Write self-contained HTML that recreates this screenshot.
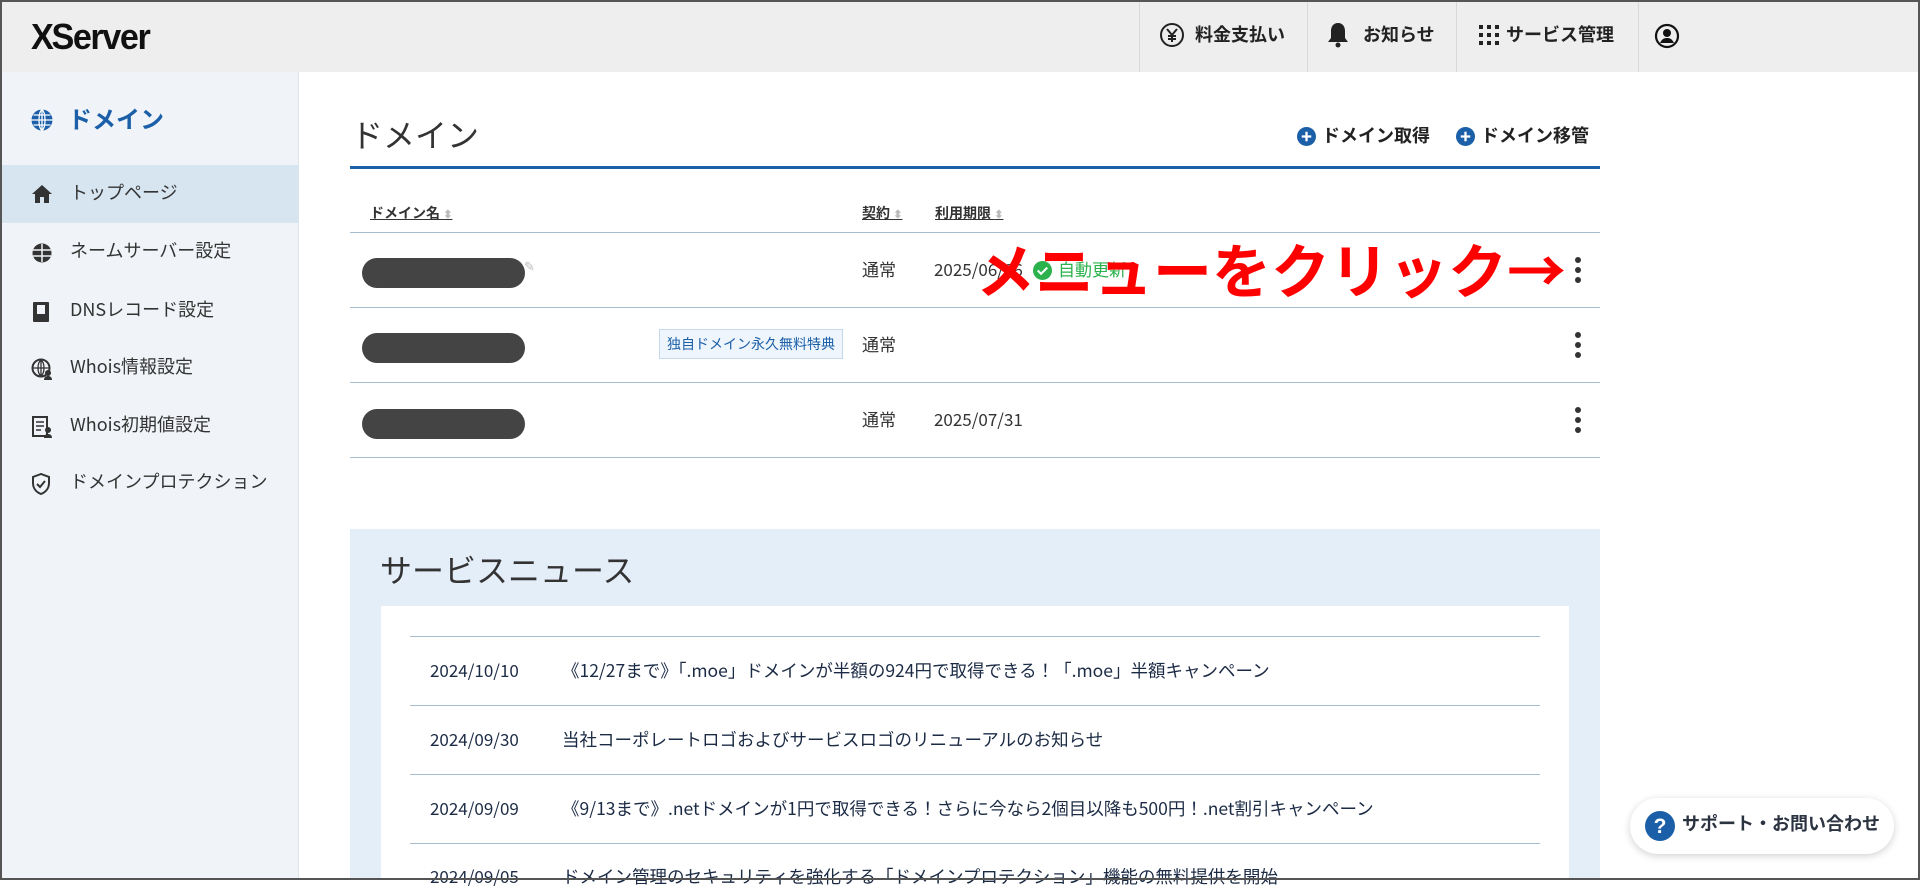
<!DOCTYPE html>
<html><head><meta charset="utf-8"><style>
*{margin:0;padding:0;box-sizing:border-box}
body{width:1920px;height:880px;overflow:hidden;position:relative;background:#fff;font-family:"Noto Sans CJK JP","Liberation Sans",sans-serif;color:#333;line-height:1.2}
.a{position:absolute;white-space:nowrap}
#frame{position:absolute;left:0;top:0;width:1920px;height:880px;border:2px solid #555;pointer-events:none;z-index:10}
#hdr{position:absolute;left:0;top:0;width:1920px;height:72px;background:#eeeeee}
.sep{position:absolute;top:0;width:1px;height:72px;background:#d8d8d8}
.hi{position:absolute;top:24px;font-size:18px;font-weight:bold;color:#222}
#side{position:absolute;left:0;top:72px;width:299px;height:808px;background:#f0f4f8;border-right:1px solid #dde3ea}
.nav{position:absolute;left:0;width:299px;height:58px;font-size:18px;color:#333}
.nav span{position:absolute;left:70px;top:17px}
.nav svg{position:absolute;left:31px;top:19px}
.line{position:absolute;height:1px;background:#a6bccf}
.pill{position:absolute;left:362px;width:163px;height:30px;border-radius:15px;background:#444}
.dots{position:absolute;left:1574px;width:8px}
.dots i{display:block;width:6px;height:6px;border-radius:3px;background:#333;margin:0 0 4px 1px}
.cell{position:absolute;font-size:17px;color:#333}
.nd{position:absolute;left:430px;font-size:17px;color:#1c2b45}
.nt{position:absolute;left:562px;font-size:17.5px;color:#1c2b45}
</style></head><body>
<div id="hdr">
 <div class="a" style="left:31px;top:15px;font-size:36px;font-weight:bold;color:#111;letter-spacing:-1.5px;font-family:'Liberation Sans',sans-serif;transform:scaleX(.95);transform-origin:left">X<span style="margin-left:-1px">Server</span></div>
 <div class="sep" style="left:1139px"></div><div class="sep" style="left:1307px"></div><div class="sep" style="left:1456px"></div><div class="sep" style="left:1638px"></div>
 <svg class="a" style="left:1159px;top:22px" width="26" height="26" viewBox="0 0 26 26"><circle cx="13" cy="13" r="11" fill="none" stroke="#222" stroke-width="2"/><path d="M8 7l5 6 5-6M13 13v7M9 14h8M9 17h8" stroke="#222" stroke-width="2" fill="none"/></svg>
 <div class="hi" style="left:1195px">料金支払い</div>
 <svg class="a" style="left:1327px;top:21px" width="22" height="28" viewBox="0 0 22 28"><path d="M11 2c-5 0-7 4-7 8v7l-3 4h20l-3-4v-7c0-4-2-8-7-8z" fill="#222"/><circle cx="11" cy="24" r="2.5" fill="#222"/></svg>
 <div class="hi" style="left:1363px">お知らせ</div>
 <svg class="a" style="left:1479px;top:25px" width="20" height="20" viewBox="0 0 20 20" fill="#222"><rect x="0" y="0" width="4" height="4"/><rect x="8" y="0" width="4" height="4"/><rect x="16" y="0" width="4" height="4"/><rect x="0" y="8" width="4" height="4"/><rect x="8" y="8" width="4" height="4"/><rect x="16" y="8" width="4" height="4"/><rect x="0" y="16" width="4" height="4"/><rect x="8" y="16" width="4" height="4"/><rect x="16" y="16" width="4" height="4"/></svg>
 <div class="hi" style="left:1506px">サービス管理</div>
 <svg class="a" style="left:1654px;top:23px" width="26" height="26" viewBox="0 0 26 26"><circle cx="13" cy="13" r="11" fill="none" stroke="#111" stroke-width="2.2"/><circle cx="13" cy="10" r="4" fill="#111"/><path d="M6 20c2-4 4-5 7-5s5 1 7 5" fill="#111"/></svg>
</div>
<div id="side">
 <svg class="a" style="left:30px;top:36px" width="24" height="24" viewBox="0 0 24 24"><circle cx="12" cy="12" r="10.5" fill="#1b5fa8"/><path d="M12 1.5v21M1.5 12h21M3.5 7h17M3.5 17h17M12 1.5c-4 3-4 18 0 21M12 1.5c4 3 4 18 0 21" stroke="#fff" stroke-width="1.3" fill="none"/></svg>
 <div class="a" style="left:68px;top:32px;font-size:24px;font-weight:bold;color:#1b5fa8">ドメイン</div>
 <div class="nav" style="top:93px;background:#d7e5f1"><svg width="22" height="20" viewBox="0 0 22 20"><path d="M11 1L1 10h3v9h5v-6h4v6h5v-9h3z" fill="#333"/></svg><span>トップページ</span></div>
 <div class="nav" style="top:151px"><svg width="22" height="22" viewBox="0 0 22 22"><circle cx="11" cy="11" r="9.5" fill="#333"/><path d="M2 8h18M2 14h18M11 2v18" stroke="#f0f4f8" stroke-width="1.5"/></svg><span>ネームサーバー設定</span></div>
 <div class="nav" style="top:210px"><svg width="20" height="22" viewBox="0 0 20 22"><rect x="2" y="1" width="16" height="20" rx="1" fill="#333"/><rect x="6" y="4" width="8" height="9" fill="#f0f4f8"/></svg><span>DNSレコード設定</span></div>
 <div class="nav" style="top:267px"><svg width="22" height="22" viewBox="0 0 22 22"><circle cx="10" cy="10" r="8.5" fill="none" stroke="#333" stroke-width="2"/><path d="M2 10h16M10 2v16M10 2c-4 3-4 13 0 16M10 2c4 3 4 13 0 16" stroke="#333" stroke-width="1.3" fill="none"/><circle cx="17" cy="15" r="3" fill="#333"/><path d="M13 22c0-3 2-4 4-4s4 1 4 4z" fill="#333"/></svg><span>Whois情報設定</span></div>
 <div class="nav" style="top:325px"><svg width="22" height="22" viewBox="0 0 22 22"><rect x="2" y="1" width="14" height="19" fill="none" stroke="#333" stroke-width="2"/><path d="M5 6h8M5 10h8M5 14h5" stroke="#333" stroke-width="1.6"/><circle cx="17" cy="14" r="3" fill="#333"/><path d="M13 22c0-3 2-4 4-4s4 1 4 4z" fill="#333"/></svg><span>Whois初期値設定</span></div>
 <div class="nav" style="top:382px"><svg width="20" height="22" viewBox="0 0 20 22"><path d="M10 1L2 4v6c0 5 3 9 8 11 5-2 8-6 8-11V4z" fill="none" stroke="#333" stroke-width="2"/><path d="M6 11l3 3 5-6" stroke="#333" stroke-width="2" fill="none"/></svg><span>ドメインプロテクション</span></div>
</div>

<div class="a" style="left:351px;top:115px;font-size:32px;color:#333">ドメイン</div>
<svg class="a" style="left:1297px;top:127px" width="19" height="19" viewBox="0 0 20 20"><circle cx="10" cy="10" r="10" fill="#1b5fa8"/><path d="M10 5v10M5 10h10" stroke="#fff" stroke-width="2.4"/></svg>
<div class="a" style="left:1322px;top:125px;font-size:18px;font-weight:bold;color:#222">ドメイン取得</div>
<svg class="a" style="left:1456px;top:127px" width="19" height="19" viewBox="0 0 20 20"><circle cx="10" cy="10" r="10" fill="#1b5fa8"/><path d="M10 5v10M5 10h10" stroke="#fff" stroke-width="2.4"/></svg>
<div class="a" style="left:1481px;top:125px;font-size:18px;font-weight:bold;color:#222">ドメイン移管</div>
<div class="a" style="left:350px;top:166px;width:1250px;height:3px;background:#1b5fa8"></div>

<div class="a" style="left:370px;top:205px;font-size:14px;font-weight:bold;color:#333;text-decoration:underline">ドメイン名 <span style="color:#bbb;font-size:11px">⬍</span></div>
<div class="a" style="left:862px;top:205px;font-size:14px;font-weight:bold;color:#333;text-decoration:underline">契約 <span style="color:#bbb;font-size:11px">⬍</span></div>
<div class="a" style="left:935px;top:205px;font-size:14px;font-weight:bold;color:#333;text-decoration:underline">利用期限 <span style="color:#bbb;font-size:11px">⬍</span></div>
<div class="line" style="left:350px;top:232px;width:1250px"></div>
<div class="line" style="left:350px;top:307px;width:1250px"></div>
<div class="line" style="left:350px;top:382px;width:1250px"></div>
<div class="line" style="left:350px;top:457px;width:1250px"></div>

<div class="pill" style="top:258px"></div><div class="a" style="left:524px;top:258px;color:#bbb;font-size:13px">✎</div>
<div class="pill" style="top:333px"></div>
<div class="pill" style="top:409px"></div>
<div class="a" style="left:659px;top:329px;width:184px;height:30px;background:#eef5fc;border:1px solid #c5d9ec;color:#1b5fa8;font-size:14px;line-height:28px;text-align:center">独自ドメイン永久無料特典</div>
<div class="cell" style="left:862px;top:259px">通常</div>
<div class="cell" style="left:862px;top:334px">通常</div>
<div class="cell" style="left:862px;top:409px">通常</div>
<div class="cell" style="left:934px;top:259px">2025/06/06</div>
<svg class="a" style="left:1033px;top:261px" width="19" height="19" viewBox="0 0 20 20"><circle cx="10" cy="10" r="10" fill="#2bb24c"/><path d="M5 10l3.5 3.5L15 7" stroke="#fff" stroke-width="2.2" fill="none"/></svg>
<div class="cell" style="left:1058px;top:259px;color:#2bb24c">自動更新</div>
<div class="cell" style="left:934px;top:409px">2025/07/31</div>
<div class="a" style="left:976px;top:228px;font-size:59px;font-weight:bold;color:#f00;line-height:80px">メニューをクリック→</div>
<div class="dots" style="top:257px"><i></i><i></i><i></i></div>
<div class="dots" style="top:332px"><i></i><i></i><i></i></div>
<div class="dots" style="top:407px"><i></i><i></i><i></i></div>

<div class="a" style="left:350px;top:529px;width:1250px;height:351px;background:#e4eef8"></div>
<div class="a" style="left:380px;top:550px;font-size:32px;color:#333">サービスニュース</div>
<div class="a" style="left:381px;top:606px;width:1188px;height:274px;background:#fff"></div>
<div class="line" style="left:410px;top:636px;width:1130px"></div>
<div class="line" style="left:410px;top:705px;width:1130px"></div>
<div class="line" style="left:410px;top:774px;width:1130px"></div>
<div class="line" style="left:410px;top:843px;width:1130px"></div>
<div class="nd" style="top:660px">2024/10/10</div><div class="nt" style="top:660px">《12/27まで》「.moe」ドメインが半額の924円で取得できる！「.moe」半額キャンペーン</div>
<div class="nd" style="top:729px">2024/09/30</div><div class="nt" style="top:729px">当社コーポレートロゴおよびサービスロゴのリニューアルのお知らせ</div>
<div class="nd" style="top:798px">2024/09/09</div><div class="nt" style="top:798px">《9/13まで》.netドメインが1円で取得できる！さらに今なら2個目以降も500円！.net割引キャンペーン</div>
<div class="nd" style="top:866px">2024/09/05</div><div class="nt" style="top:866px">ドメイン管理のセキュリティを強化する「ドメインプロテクション」機能の無料提供を開始</div>

<div class="a" style="left:1630px;top:798px;width:264px;height:56px;border-radius:28px;background:#fff;box-shadow:0 2px 8px rgba(0,0,0,.18)"></div>
<svg class="a" style="left:1645px;top:811px" width="30" height="30" viewBox="0 0 30 30"><circle cx="15" cy="15" r="15" fill="#1b5fa8"/><text x="15" y="22" text-anchor="middle" font-size="21" font-weight="bold" fill="#fff" font-family="Liberation Sans">?</text></svg>
<div class="a" style="left:1682px;top:813px;font-size:18px;font-weight:bold;color:#2b3340">サポート・お問い合わせ</div>
<div id="frame"></div>
</body></html>
